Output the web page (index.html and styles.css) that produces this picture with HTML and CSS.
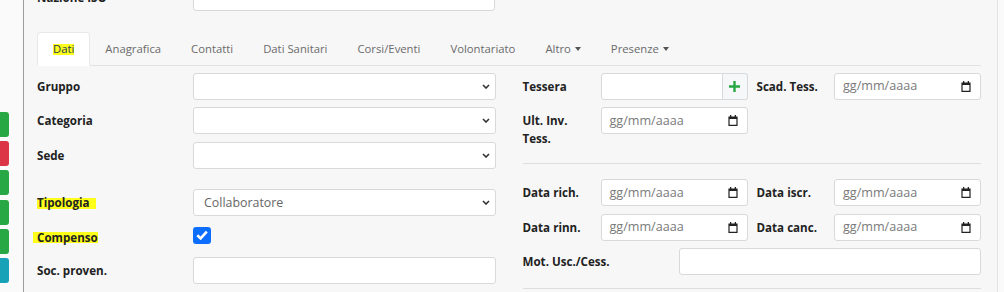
FILE: index.html
```html
<!DOCTYPE html>
<html lang="it">
<head>
  <meta charset="UTF-8">
  <meta name="viewport" content="width=device-width, initial-scale=1.0">
  <title>Scheda socio</title>
  <link rel="stylesheet" href="styles.css">
</head>
<body>
<div class="page">
  <div class="side">
    <span class="sbtn green"></span>
    <span class="sbtn red"></span>
    <span class="sbtn green"></span>
    <span class="sbtn green"></span>
    <span class="sbtn green"></span>
    <span class="sbtn teal"></span>
  </div>

  <div class="main">
    <div class="frow top">
      <label class="lbl">Nazione ISO</label>
      <div class="ctl select"><span></span><svg class="chev" width="8" height="5" viewBox="0 0 8 5"><polyline points="1,1 4,4 7,1" fill="none" stroke="#333" stroke-width="1.6"/></svg></div>
    </div>

    <ul class="tabs">
      <li class="tab active"><span class="hl">Dati</span></li>
      <li class="tab">Anagrafica</li>
      <li class="tab">Contatti</li>
      <li class="tab">Dati Sanitari</li>
      <li class="tab">Corsi/Eventi</li>
      <li class="tab">Volontariato</li>
      <li class="tab drop">Altro</li>
      <li class="tab drop">Presenze</li>
    </ul>

    <div class="cols">
      <!-- colonna sinistra -->
      <div class="col">
        <div class="frow">
          <label class="lbl">Gruppo</label>
          <div class="ctl select"><span></span><svg class="chev" width="8" height="5" viewBox="0 0 8 5"><polyline points="1,1 4,4 7,1" fill="none" stroke="#333" stroke-width="1.6"/></svg></div>
        </div>
        <div class="frow">
          <label class="lbl">Categoria</label>
          <div class="ctl select"><span></span><svg class="chev" width="8" height="5" viewBox="0 0 8 5"><polyline points="1,1 4,4 7,1" fill="none" stroke="#333" stroke-width="1.6"/></svg></div>
        </div>
        <div class="frow">
          <label class="lbl">Sede</label>
          <div class="ctl select"><span></span><svg class="chev" width="8" height="5" viewBox="0 0 8 5"><polyline points="1,1 4,4 7,1" fill="none" stroke="#333" stroke-width="1.6"/></svg></div>
        </div>
        <div class="frow spaced">
          <label class="lbl"><span class="hl hl-tip">Tipologia</span></label>
          <div class="ctl select"><span class="val">Collaboratore</span><svg class="chev" width="8" height="5" viewBox="0 0 8 5"><polyline points="1,1 4,4 7,1" fill="none" stroke="#333" stroke-width="1.6"/></svg></div>
        </div>
        <div class="frow check-row">
          <label class="lbl"><span class="hl hl-comp">Compenso</span></label>
          <div><span class="check"><svg width="12" height="10" viewBox="0 0 12 10"><polyline points="1.3,5.2 4.6,8.4 10.8,1.6" fill="none" stroke="#fff" stroke-width="2.6"/></svg></span></div>
        </div>
        <div class="frow">
          <label class="lbl">Soc. proven.</label>
          <div class="ctl"></div>
        </div>
        <div class="frow">
          <label class="lbl">Soc. dest.</label>
          <div class="ctl"></div>
        </div>
      </div>

      <!-- colonna destra -->
      <div class="col">
        <div class="rgroup">
          <div class="rrow">
            <label class="lbl">Tessera</label>
            <div class="igroup">
              <div class="ctl"></div>
              <span class="addon"><svg width="11" height="11" viewBox="0 0 11 11"><path d="M4.3 0h2.4v4.3H11v2.4H6.7V11H4.3V6.7H0V4.3h4.3z" fill="#28a745"/></svg></span>
            </div>
            <label class="lbl second">Scad. Tess.</label>
            <div class="ctl date"><span class="ph">gg/mm/aaaa</span><svg class="cal" width="10" height="11" viewBox="0 0 10 11"><path d="M2 0h1.3v1.5h3.4V0H8v1.5h1.6V11H.4V1.5H2zM1.6 4.1v5.7h6.8V4.1z" fill="#222" fill-rule="evenodd"/></svg></div>
          </div>
          <div class="rrow">
            <label class="lbl">Ult. Inv. Tess.</label>
            <div class="ctl date"><span class="ph">gg/mm/aaaa</span><svg class="cal" width="10" height="11" viewBox="0 0 10 11"><path d="M2 0h1.3v1.5h3.4V0H8v1.5h1.6V11H.4V1.5H2zM1.6 4.1v5.7h6.8V4.1z" fill="#222" fill-rule="evenodd"/></svg></div>
          </div>
        </div>

        <hr class="sep">

        <div class="rgroup">
          <div class="rrow">
            <label class="lbl">Data rich.</label>
            <div class="ctl date"><span class="ph">gg/mm/aaaa</span><svg class="cal" width="10" height="11" viewBox="0 0 10 11"><path d="M2 0h1.3v1.5h3.4V0H8v1.5h1.6V11H.4V1.5H2zM1.6 4.1v5.7h6.8V4.1z" fill="#222" fill-rule="evenodd"/></svg></div>
            <label class="lbl second">Data iscr.</label>
            <div class="ctl date"><span class="ph">gg/mm/aaaa</span><svg class="cal" width="10" height="11" viewBox="0 0 10 11"><path d="M2 0h1.3v1.5h3.4V0H8v1.5h1.6V11H.4V1.5H2zM1.6 4.1v5.7h6.8V4.1z" fill="#222" fill-rule="evenodd"/></svg></div>
          </div>
          <div class="rrow">
            <label class="lbl">Data rinn.</label>
            <div class="ctl date"><span class="ph">gg/mm/aaaa</span><svg class="cal" width="10" height="11" viewBox="0 0 10 11"><path d="M2 0h1.3v1.5h3.4V0H8v1.5h1.6V11H.4V1.5H2zM1.6 4.1v5.7h6.8V4.1z" fill="#222" fill-rule="evenodd"/></svg></div>
            <label class="lbl second">Data canc.</label>
            <div class="ctl date"><span class="ph">gg/mm/aaaa</span><svg class="cal" width="10" height="11" viewBox="0 0 10 11"><path d="M2 0h1.3v1.5h3.4V0H8v1.5h1.6V11H.4V1.5H2zM1.6 4.1v5.7h6.8V4.1z" fill="#222" fill-rule="evenodd"/></svg></div>
          </div>
          <div class="rrow wide">
            <label class="lbl">Mot. Usc./Cess.</label>
            <div class="ctl"></div>
          </div>
        </div>

        <hr class="sep last">
      </div>
    </div>
  </div>
</div>
</body>
</html>
```

FILE: styles.css
```css
body {
  margin: 0;
  background: #fafafa;
  font-family: "Open Sans", "Liberation Sans", sans-serif;
  font-size: 11.6px;
  line-height: 18px;
  color: #212529;
  overflow: hidden;
}
.page {
  display: flex;
  align-items: flex-start;
}

/* pulsanti laterali */
.side {
  width: 9px;
  flex-shrink: 0;
  padding-top: 112px;
  display: flex;
  flex-direction: column;
  gap: 4.2px;
}
.sbtn {
  display: block;
  height: 25px;
  border-radius: 0 3px 3px 0;
}
.green { background: #28a745; }
.red { background: #dc3545; }
.teal { background: #17a2b8; }

.main {
  margin-left: 14px;
  width: 944px;
  padding: 0 16px 40px 13px;
  background: #f7f7f7;
  border-left: 1px solid #9c9c9c;
  border-right: 1px solid #e2e2e2;
}

/* righe form */
.frow {
  display: grid;
  grid-template-columns: 156px 1fr;
  margin-bottom: 7.5px;
}
.frow.top {
  grid-template-columns: 156px 302px;
  margin-top: -16px;
  margin-bottom: 0;
}
.frow.spaced {
  margin-top: 20.5px;
}
.frow.check-row {
  min-height: 26px;
}
.lbl {
  font-weight: 700;
  padding-top: 5px;
  color: #222;
}
.ctl {
  height: 27px;
  box-sizing: border-box;
  background: #fff;
  border: 1px solid #d7d9db;
  border-radius: 3px;
}
.select {
  display: flex;
  align-items: center;
  justify-content: space-between;
  padding: 0 5px 0 10px;
}
.select .val {
  font-size: 12.4px;
  color: #666;
}
.chev {
  display: block;
}
.date {
  display: flex;
  align-items: center;
  justify-content: space-between;
  padding: 0 9px 0 8px;
}
.ph {
  font-size: 12.6px;
  color: #7a7a7a;
}
.cal {
  display: block;
}

/* checkbox */
.check {
  display: flex;
  align-items: center;
  justify-content: center;
  width: 18px;
  height: 17px;
  margin-top: 3px;
  background: #0d6efd;
  border-radius: 3px;
}

/* evidenziatore */
.hl {
  background: linear-gradient(#ffff1a, #ffff1a) no-repeat 0 3px / 100% 11px;
}
.hl-tip {
  padding-right: 6px;
}
.hl-comp {
  padding-left: 4px;
  margin-left: -4px;
  background-position: 0 2px;
}

/* schede */
.tabs {
  display: flex;
  list-style: none;
  margin: 21px 0 0;
  padding: 0;
  border-bottom: 1px solid #e0e2e4;
  font-size: 11.3px;
}
.tab {
  padding: 7px 14px;
  margin-bottom: -1px;
  border: 1px solid transparent;
  border-radius: 4px 4px 0 0;
  color: #6b6b6b;
}
.tab.active {
  padding: 7px 15px;
  background: #fff;
  border-color: #e6e8ea #e6e8ea #fff;
  color: #1d3a56;
}
.tab.drop::after {
  content: "";
  display: inline-block;
  margin-left: 4px;
  vertical-align: 2px;
  border-top: 4px solid #555;
  border-left: 3px solid transparent;
  border-right: 3px solid transparent;
}

/* colonne */
.cols {
  display: grid;
  grid-template-columns: 1fr 1fr;
  column-gap: 27px;
  margin-top: 6.5px;
}
.rrow {
  display: grid;
  grid-template-columns: 78px 147px 1fr 147px;
  align-items: start;
  margin-bottom: 7.5px;
}
.rrow .lbl {
  padding-right: 8px;
}
.rgroup .rrow:last-child {
  margin-bottom: 0;
}
.rrow.wide {
  grid-template-columns: 156px 1fr;
}
.lbl.second {
  padding-left: 9px;
}
.igroup {
  display: flex;
}
.igroup .ctl {
  flex: 1;
  border-radius: 3px 0 0 3px;
}
.addon {
  width: 25px;
  height: 27px;
  box-sizing: border-box;
  display: flex;
  align-items: center;
  justify-content: center;
  background: #f6f7f8;
  border: 1px solid #d7d9db;
  border-left: none;
  border-radius: 0 3px 3px 0;
}
.sep {
  border: 0;
  border-top: 1px solid #dedede;
  margin: 15px 0;
}
.sep.last {
  margin-top: 13px;
}
```
